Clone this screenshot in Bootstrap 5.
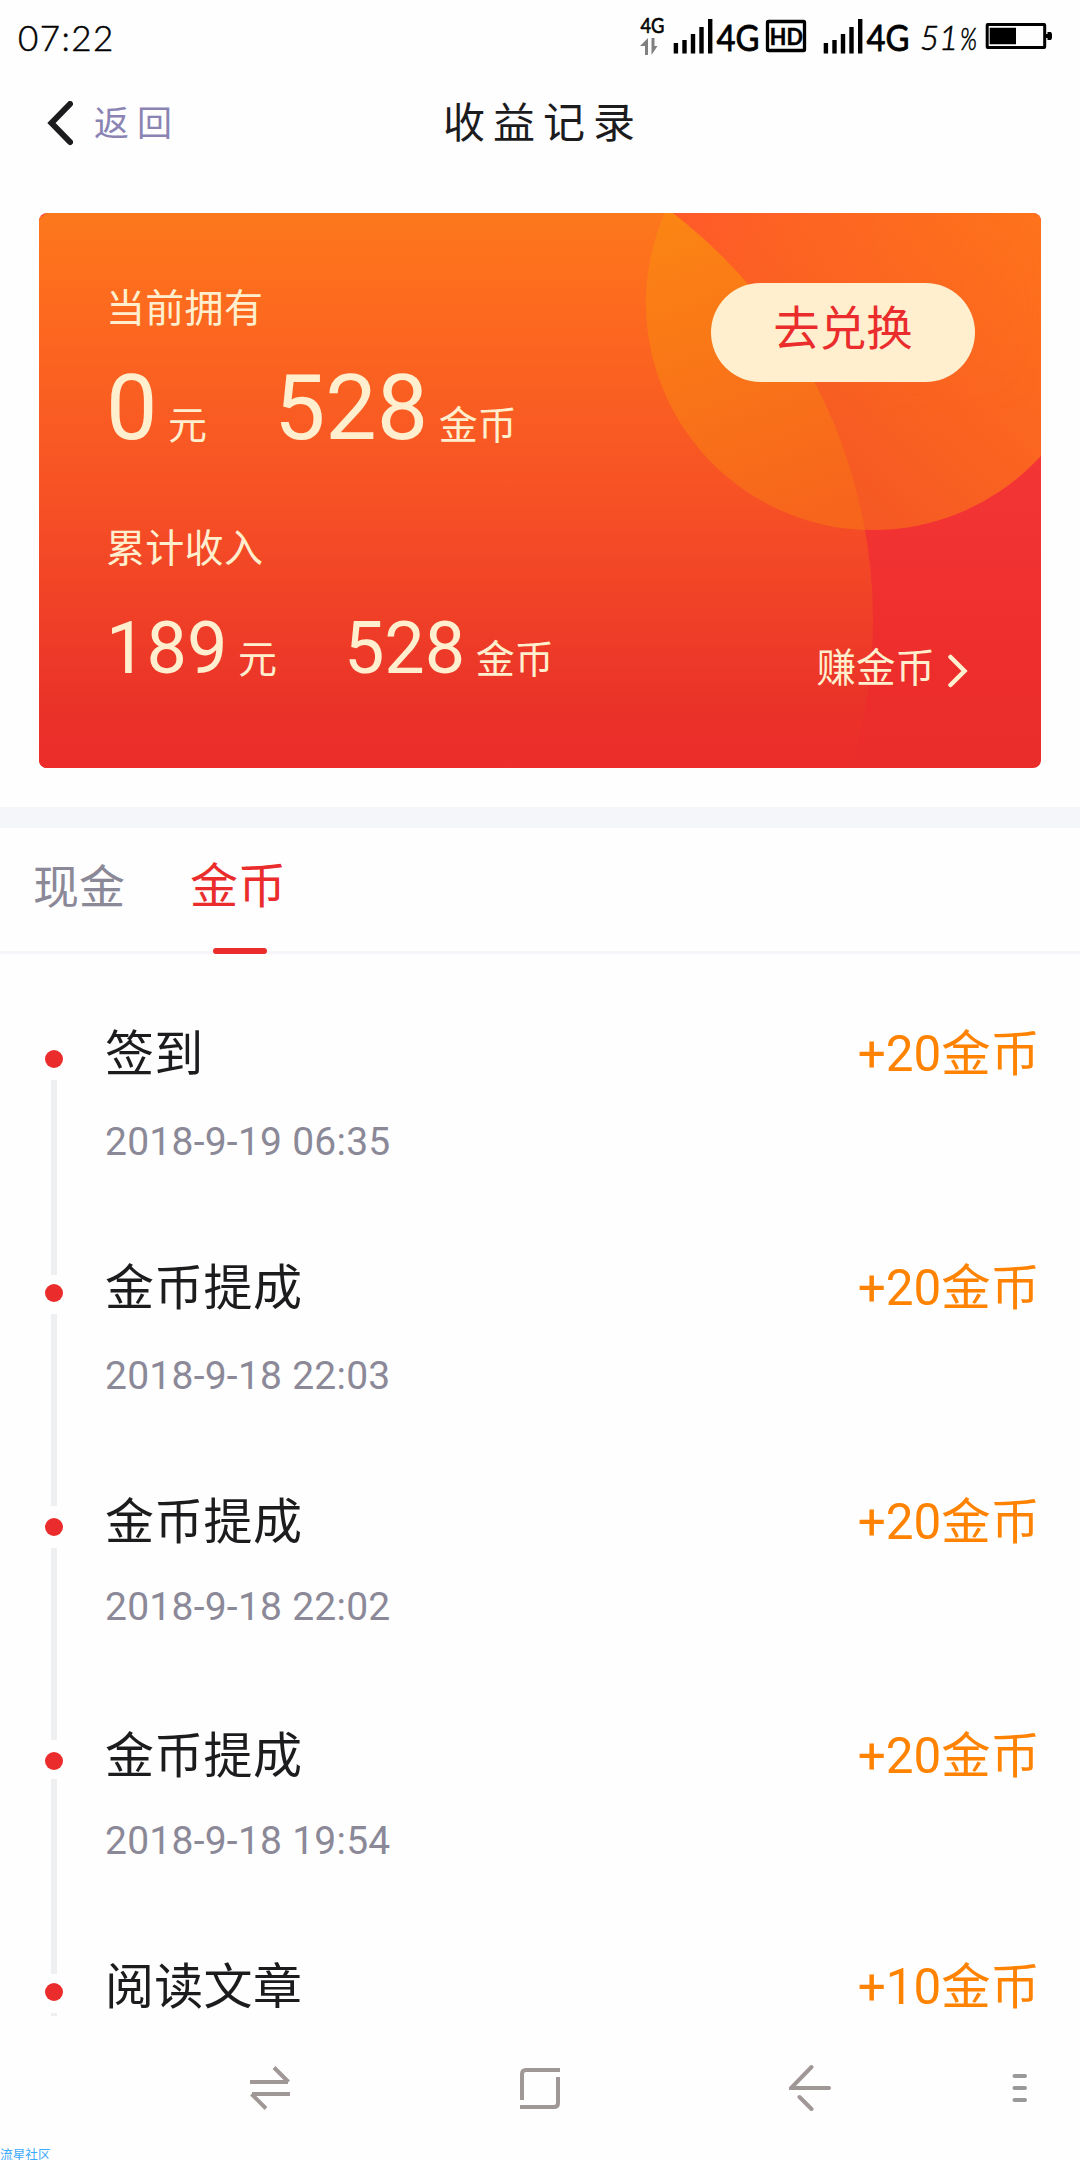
<!DOCTYPE html>
<html lang="zh-CN">
<head>
<meta charset="utf-8">
<meta name="viewport" content="width=device-width, initial-scale=1">
<title>收益记录</title>
<link rel="stylesheet" href="https://cdn.jsdelivr.net/npm/bootstrap@5.3.0/dist/css/bootstrap.min.css">
<style>
  body { font-family: Roboto, "Noto Sans CJK SC", sans-serif; background: #fefefe; color: #1c1c1e; width: 1080px; height: 2160px; overflow: hidden; }
  svg { display: block; flex: none; }
  .status-bar { height: 76px; padding: 0 28px 0 18px; color: #000; }
  .clock { font: 300 35px/75px Lato, sans-serif; letter-spacing: 1.4px; -webkit-text-stroke: .5px #000; }
  .title-bar { height: 137px; padding: 25px 0 0 45px; }
  .back-link { color: #8a84b4; font-size: 35px; line-height: 48px; letter-spacing: 8px; margin-left: 21px; width: 349px; }
  .page-title { font-size: 42px; line-height: 46px; letter-spacing: 8px; font-weight: 400; }
  .wallet { width: 1002px; height: 555px; margin-left: 39px; border-radius: 8px; overflow: hidden; color: #ffefcf; }
  .wallet-art { position: absolute; inset: 0; }
  .wallet-body { position: relative; height: 100%; padding: 0 66px 0 67px; }
  .caption-text { font-size: 39px; line-height: 48px; margin-top: 72px; letter-spacing: .3px; }
  .sum-lg { font-size: 91.5px; line-height: 100px; margin-top: 25px; }
  .sum-lg + .caption-text { margin-top: 49px; }
  .sum-md { font-size: 72px; line-height: 80px; margin-top: 36px; }
  .unit { font-size: 39px; margin-left: 10.500px; }
  .unit-cash { display: inline-block; width: 106px; }
  .redeem { width: 264px; height: 99px; border-radius: 50px; background: #ffefcf; color: #ea2d2c; font-size: 46.5px; line-height: 84px; border: 0; padding: 0 0 7px; margin-top: 70px; }
  .earn { font-size: 39.5px; line-height: 48px; margin-bottom: 75px; padding-right: 7px; }
  .earn svg { margin: 3px 0 0 13px; }
  .divider { height: 21px; margin-top: 39px; background: #f5f6fa; }
  .tabs { height: 126px; border-bottom: 3px solid #f5f5fa; padding-left: 33px; gap: 65px; }
  .tab-item { font-size: 46px; line-height: 118px; color: #8b8998; position: relative; }
  .tab-item.on { font-size: 48px; color: #ea2d2c; }
  .tab-item.on::after { content: ""; position: absolute; left: 50%; margin-left: -25.5px; top: 120px; width: 54px; height: 6px; border-radius: 3px; background: #ea2d2c; }
  .records { height: 1062px; padding-top: 66px; overflow: hidden; }
  .record { height: 234px; padding: 0 40px 0 45px; }
  .record.r4 { height: 231px; }
  .rail { width: 18px; padding-top: 30px; margin-right: 42px; }
  .dot { width: 18px; height: 18px; border-radius: 50%; background: #ea2d2c; margin-bottom: 12px; flex: none; }
  .line { width: 6px; height: 195px; background: #eeeff1; flex: none; }
  .r2 .line, .r3 .line { height: 192px; }
  .r4 .dot { margin-bottom: 9px; }
  .what, .amount { font-size: 49px; line-height: 68px; }
  .what { letter-spacing: .3px; padding-top: 1px; }
  .amount { color: #ff8200; font-size: 49.4px; }
  .when { font-size: 39px; line-height: 46px; color: #8b8998; margin-top: 30px; letter-spacing: .25px; }
  .r3 .when, .r4 .when { margin-top: 27px; }
  .sys-nav { height: 132px; padding-left: 250px; }
  .mark-text { font-size: 12.7px; line-height: 13px; height: 12px; color: #3da9fc; }
</style>
<script src="https://cdn.jsdelivr.net/npm/bootstrap@5.3.0/dist/js/bootstrap.bundle.min.js"></script>
</head>
<body>
<div class="status-bar d-flex justify-content-between">
  <span class="clock">07:22</span>
  <svg width="412" height="76" viewBox="640 0 412 76" font-family="Lato, sans-serif">
    <text x="640.5" y="33" font-size="21" font-weight="400" stroke="#000" stroke-width=".6" textLength="24" lengthAdjust="spacingAndGlyphs">4G</text>
    <path d="M648 38v17h-3V46h-5zM651.500 38v17l6-9h-3v-8z" fill="#808080"/>
    <g id="bars"><path d="M673.700 43h4.400v10.500h-4.400zM682.300 40h4.400v13.500h-4.400zM690.800 34h4.400v19.500h-4.400zM699.300 27h4.400v26.500h-4.400zM708 19h4.400v34.500H708z"/></g>
    <text x="716.500" y="51" font-size="37" font-weight="400" stroke="#000" stroke-width=".8" textLength="43" lengthAdjust="spacingAndGlyphs">4G</text>
    <rect x="767.500" y="21.500" width="37" height="29" rx="1" fill="none" stroke="#000" stroke-width="3.300"/>
    <text x="769.800" y="44.500" font-size="23" font-weight="700" stroke="#000" stroke-width=".5" textLength="33" lengthAdjust="spacingAndGlyphs">HD</text>
    <use href="#bars" x="150"/>
    <text x="866.500" y="51" font-size="37" font-weight="400" stroke="#000" stroke-width=".8" textLength="43" lengthAdjust="spacingAndGlyphs">4G</text>
    <g font-size="33" font-style="italic" font-weight="300" stroke="#000" stroke-width=".6"><text x="920" y="50">5</text><text x="939" y="50">1</text><text x="960" y="50" font-size="31" textLength="17" lengthAdjust="spacingAndGlyphs">%</text></g>
    <rect x="987.200" y="24.500" width="57.500" height="23" rx=".5" fill="none" stroke="#000" stroke-width="3"/>
    <path d="M989.700 27.700H1016V44.300h-26.300zM1046 34h1.500v-2h3.500l1 2v4l-1 2h-3.500v-2H1046z"/>
  </svg>
</div>

<div class="title-bar d-flex align-items-start">
  <svg width="28" height="46" viewBox="0 0 28 46"><path d="M25 3 6.500 22 25 41" fill="none" stroke="#1c1c1e" stroke-width="6" stroke-linecap="round" stroke-linejoin="miter"/></svg>
  <a class="back-link text-decoration-none" href="#">返回</a>
  <h1 class="page-title mb-0">收益记录</h1>
</div>

<section class="wallet position-relative">
  <svg class="wallet-art" width="1002" height="555" viewBox="0 0 1002 555">
    <defs>
      <linearGradient id="gBase" x1="0" y1="0" x2="0" y2="1"><stop offset="0" stop-color="#fc3d3d"/><stop offset=".5" stop-color="#f33434"/><stop offset=".85" stop-color="#ec2d2b"/><stop offset="1" stop-color="#ea2c2b"/></linearGradient>
      <linearGradient id="gDisc" gradientUnits="userSpaceOnUse" x1="0" y1="0" x2="0" y2="555"><stop offset="0" stop-color="#fc781c"/><stop offset=".09" stop-color="#fe701d"/><stop offset=".5" stop-color="#f75225"/><stop offset=".88" stop-color="#ea3329"/><stop offset="1" stop-color="#ec2c2a"/></linearGradient>
      <linearGradient id="gSun" gradientUnits="userSpaceOnUse" x1="750" y1="280" x2="1000" y2="0"><stop offset="0" stop-color="#f55624"/><stop offset="1" stop-color="#ff731c"/></linearGradient>
      <linearGradient id="gSunTop" gradientUnits="userSpaceOnUse" x1="640" y1="0" x2="1002" y2="0"><stop offset="0" stop-color="#ff5a2a"/><stop offset="1" stop-color="#ff731c" stop-opacity="0"/></linearGradient>
      <linearGradient id="gLens" gradientUnits="userSpaceOnUse" x1="620" y1="0" x2="730" y2="317"><stop offset="0" stop-color="#fb8513"/><stop offset="1" stop-color="#f7651c"/></linearGradient>
      <clipPath id="cDisc"><circle cx="320.400" cy="407" r="513.600"/></clipPath>
      <linearGradient id="gFade" gradientUnits="userSpaceOnUse" x1="0" y1="0" x2="0" y2="200"><stop offset="0" stop-color="#fff"/><stop offset="1" stop-color="#000"/></linearGradient>
      <mask id="mFade"><rect width="1002" height="555" fill="url(#gFade)"/></mask>
    </defs>
    <rect width="1002" height="555" fill="url(#gBase)"/>
    <circle cx="834" cy="90" r="227" fill="url(#gSun)"/>
    <g mask="url(#mFade)"><circle cx="834" cy="90" r="227" fill="url(#gSunTop)"/></g>
    <g clip-path="url(#cDisc)">
      <rect width="1002" height="555" fill="url(#gDisc)"/>
      <circle cx="834" cy="90" r="227" fill="url(#gLens)"/>
    </g>
  </svg>
  <div class="wallet-body d-flex justify-content-between">
    <div class="d-flex flex-column">
      <div class="caption-text">当前拥有</div>
      <div class="sum-lg text-nowrap">0<span class="unit unit-cash">元</span>528<span class="unit">金币</span></div>
      <div class="caption-text">累计收入</div>
      <div class="sum-md text-nowrap">189<span class="unit unit-cash">元</span>528<span class="unit">金币</span></div>
    </div>
    <div class="d-flex flex-column justify-content-between align-items-end">
      <button class="redeem" type="button">去兑换</button>
      <a class="earn d-flex align-items-center text-reset text-decoration-none" href="#">赚金币
        <svg width="20" height="36" viewBox="0 0 20 36"><path d="M2.500 4 16.500 18 2.500 32" fill="none" stroke="#ffefcf" stroke-width="4.500" stroke-linecap="round"/></svg>
      </a>
    </div>
  </div>
</section>

<div class="divider"></div>
<nav class="tabs d-flex">
  <span class="tab-item">现金</span>
  <span class="tab-item on">金币</span>
</nav>

<main class="records">
  <div class="record r1 d-flex">
    <div class="rail d-flex flex-column align-items-center"><i class="dot"></i><i class="line"></i></div>
    <div class="flex-grow-1"><div class="what">签到</div><div class="when">2018-9-19 06:35</div></div>
    <div class="amount">+20金币</div>
  </div>
  <div class="record r2 d-flex">
    <div class="rail d-flex flex-column align-items-center"><i class="dot"></i><i class="line"></i></div>
    <div class="flex-grow-1"><div class="what">金币提成</div><div class="when">2018-9-18 22:03</div></div>
    <div class="amount">+20金币</div>
  </div>
  <div class="record r3 d-flex">
    <div class="rail d-flex flex-column align-items-center"><i class="dot"></i><i class="line"></i></div>
    <div class="flex-grow-1"><div class="what">金币提成</div><div class="when">2018-9-18 22:02</div></div>
    <div class="amount">+20金币</div>
  </div>
  <div class="record r4 d-flex">
    <div class="rail d-flex flex-column align-items-center"><i class="dot"></i><i class="line"></i></div>
    <div class="flex-grow-1"><div class="what">金币提成</div><div class="when">2018-9-18 19:54</div></div>
    <div class="amount">+20金币</div>
  </div>
  <div class="record r5 d-flex">
    <div class="rail d-flex flex-column align-items-center"><i class="dot"></i><i class="line"></i></div>
    <div class="flex-grow-1"><div class="what">阅读文章</div></div>
    <div class="amount">+10金币</div>
  </div>
</main>

<footer class="sys-nav d-flex">
  <svg width="270" height="132" viewBox="250 2016 270 132" fill="none" stroke="#a09896" stroke-width="4"><path d="M250 2082h38M274 2067.500l14.500 14.500M290 2094h-38M251.500 2094l14.500 14.500"/></svg>
  <svg width="269" height="132" viewBox="520 2016 269 132" fill="none" stroke="#a09896" stroke-width="4"><path d="M522 2100v-26q0-4 4-4h34M558 2077v26q0 4-4 4h-34"/></svg>
  <svg width="223" height="132" viewBox="789 2016 223 132" fill="none" stroke="#a09896" stroke-width="4" stroke-linecap="round"><path d="M829 2088h-38l20.500-21M799.500 2097l12 12"/></svg>
  <svg width="16" height="132" viewBox="1012 2016 16 132" fill="none" stroke="#999" stroke-width="4" stroke-linecap="round"><path d="M1014.500 2076h10.500M1014.500 2088h10.500M1014.500 2100h10.500"/></svg>
</footer>
<div class="mark-text">流星社区</div>
</body>
</html>
